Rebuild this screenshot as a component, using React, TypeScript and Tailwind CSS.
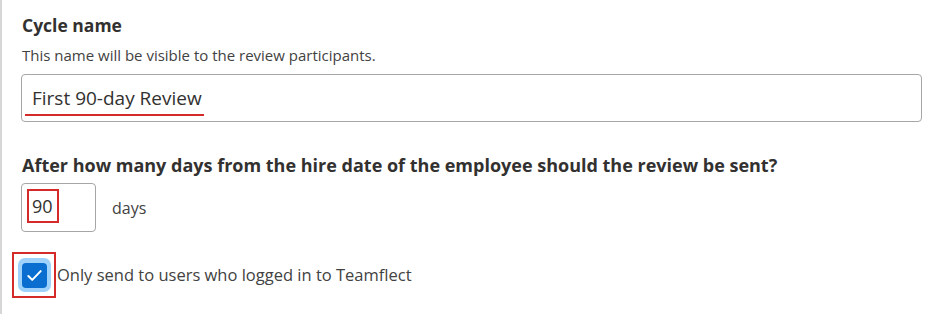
export default function App() {
  return (
    <div className="h-[314px] w-[941px] bg-white border-l-2 border-[#d6d6d6] font-['Open_Sans',sans-serif] text-[#323130]">
      <div className="pl-[19px] pr-[19px] pt-[12px]">
        <h2 className="pl-[1px] text-[17.5px] font-bold leading-[26px] text-[#323130]">Cycle name</h2>
        <p className="pl-[1px] mt-[7px] text-[15px] leading-[20px] text-[#424242]">
          This name will be visible to the review participants.
        </p>
        <div className="mt-[9px] h-[48px] rounded-[4px] border border-[#a6a6a6] flex items-center pl-[10px]">
          <span className="relative text-[19px] text-[#323130] leading-[26px]">
            First 90-day Review
            <span className="absolute left-[-7px] right-[-2px] bottom-[-5px] h-[2px] bg-[#d42a2a]" />
          </span>
        </div>

        <h3 className="pl-[1px] mt-[31px] text-[18px] font-bold leading-[24px] text-[#323130]">
          After how many days from the hire date of the employee should the review be sent?
        </h3>
        <div className="mt-[6px] flex items-center gap-[16px]">
          <div className="h-[49px] w-[75px] rounded-[4px] border border-[#a6a6a6] pl-[5px] pt-[5px]">
            <span className="h-[34px] w-[32px] border-2 border-[#d42a2a] flex items-center pl-[3px] text-[18px] leading-[24px] text-[#323130]">
              90
            </span>
          </div>
          <span className="text-[16px] leading-[24px] text-[#424242]">days</span>
        </div>

        <div className="mt-[20px] -ml-[9px] flex items-center">
          <div className="h-[46px] w-[44px] border-2 border-[#d42a2a] flex items-center justify-center">
            <div className="h-[34px] w-[33px] rounded-[7px] bg-[#9fd2fb] flex items-center justify-center">
              <div className="h-[25px] w-[25px] rounded-[4px] bg-[#0a6ed1] flex items-center justify-center">
                <svg width="19" height="19" viewBox="0 0 16 16" fill="none">
                  <path d="M2.8 8.4l3.3 3.3 7.1-7.4" stroke="white" strokeWidth="1.7" strokeLinecap="round" strokeLinejoin="round" />
                </svg>
              </div>
            </div>
          </div>
          <span className="ml-[1px] text-[16.5px] leading-[24px] text-[#424242]">Only send to users who logged in to Teamflect</span>
        </div>
      </div>
    </div>
  )
}
